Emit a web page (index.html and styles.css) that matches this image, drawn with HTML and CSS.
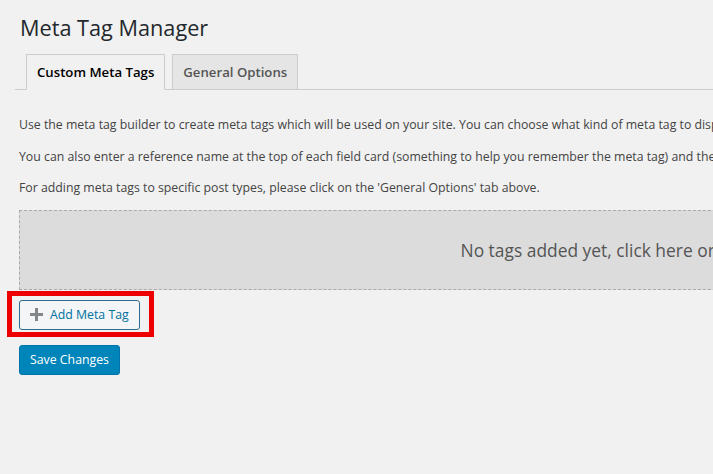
FILE: index.html
```html
<!DOCTYPE html>
<html>
<head>
<meta charset="utf-8">
<link rel="stylesheet" href="styles.css">
</head>
<body>
<div class="wrap">
  <h1 class="title">Meta Tag Manager</h1>
  <nav class="tabs">
    <a class="tab active">Custom Meta Tags</a>
    <a class="tab">General Options</a>
  </nav>
  <div class="content">
    <p>Use the meta tag builder to create meta tags which will be used on your site. You can choose what kind of meta tag to display and what content it should contain.</p>
    <p>You can also enter a reference name at the top of each field card (something to help you remember the meta tag) and then choose where it should be displayed.</p>
    <p>For adding meta tags to specific post types, please click on the 'General Options' tab above.</p>
    <div class="empty">No tags added yet, click here or add one below.</div>
    <div class="add-row">
      <button class="btn-add"><span class="plus"></span>Add Meta Tag</button>
      <span class="highlight"></span>
    </div>
    <button class="btn-save">Save Changes</button>
  </div>
</div>
</body>
</html>
```
FILE: styles.css
```css
html, body {
  margin: 0;
  padding: 0;
  background: #f1f1f1;
  overflow: hidden;
}
body {
  font-family: "Open Sans", "Noto Sans", sans-serif;
  color: #444;
  width: 713px;
  height: 474px;
}
.wrap {
  width: 1266px;
  padding-left: 19px;
}
.title {
  margin: 0;
  padding: 13px 0 0 1px;
  font-size: 21.7px;
  font-weight: 400;
  line-height: 29px;
  color: #23282d;
  height: 41px;
}
.tabs {
  display: flex;
  gap: 7px;
  margin-left: -4px;
  padding-left: 11px;
  border-bottom: 1px solid #ccc;
  height: 35px;
  align-items: flex-end;
}
.tab {
  box-sizing: border-box;
  height: 36px;
  margin-bottom: -1px;
  padding: 0 10px;
  display: flex;
  align-items: center;
  font-size: 13.2px;
  font-weight: 600;
  border: 1px solid #ccc;
  background: #e5e5e5;
  color: #555;
}
.tab.active {
  background: #f1f1f1;
  border-bottom-color: #f1f1f1;
  color: #000;
}
.content {
  padding-top: 25px;
}
.content p {
  margin: 0 0 12px;
  font-size: 12.3px;
  line-height: 19.5px;
  white-space: nowrap;
  color: #444;
}
.empty {
  margin-top: 7px;
  box-sizing: border-box;
  height: 80px;
  border: 1px dashed #aaa;
  background: #dcdcdc;
  display: flex;
  align-items: center;
  justify-content: center;
  font-size: 17.4px;
  white-space: nowrap;
  color: #555;
}
.add-row {
  position: relative;
  margin-top: 10px;
  height: 30px;
}
.btn-add {
  box-sizing: border-box;
  height: 30px;
  width: 121px;
  padding: 0 0 0 10px;
  display: flex;
  align-items: center;
  gap: 7px;
  white-space: nowrap;
  font-family: inherit;
  font-size: 12.3px;
  color: #0071a1;
  background: #f3f5f6;
  border: 1px solid #2f6b8a;
  border-radius: 3px;
}
.plus {
  position: relative;
  flex: none;
  width: 13px;
  height: 13px;
}
.plus::before, .plus::after {
  content: "";
  position: absolute;
  background: #82878c;
}
.plus::before {
  left: 5px; top: 0; width: 3px; height: 13px;
}
.plus::after {
  left: 0; top: 5px; width: 13px; height: 3px;
}
.highlight {
  position: absolute;
  left: -12px;
  top: -9px;
  width: 147px;
  height: 46px;
  box-sizing: border-box;
  border: 5px solid #ee0000;
}
.btn-save {
  margin-top: 15px;
  box-sizing: border-box;
  height: 30px;
  width: 101px;
  padding: 0;
  font-family: inherit;
  font-size: 12.3px;
  color: #fff;
  background: #0085ba;
  border: 1px solid #0073aa;
  border-radius: 3px;
}
```
